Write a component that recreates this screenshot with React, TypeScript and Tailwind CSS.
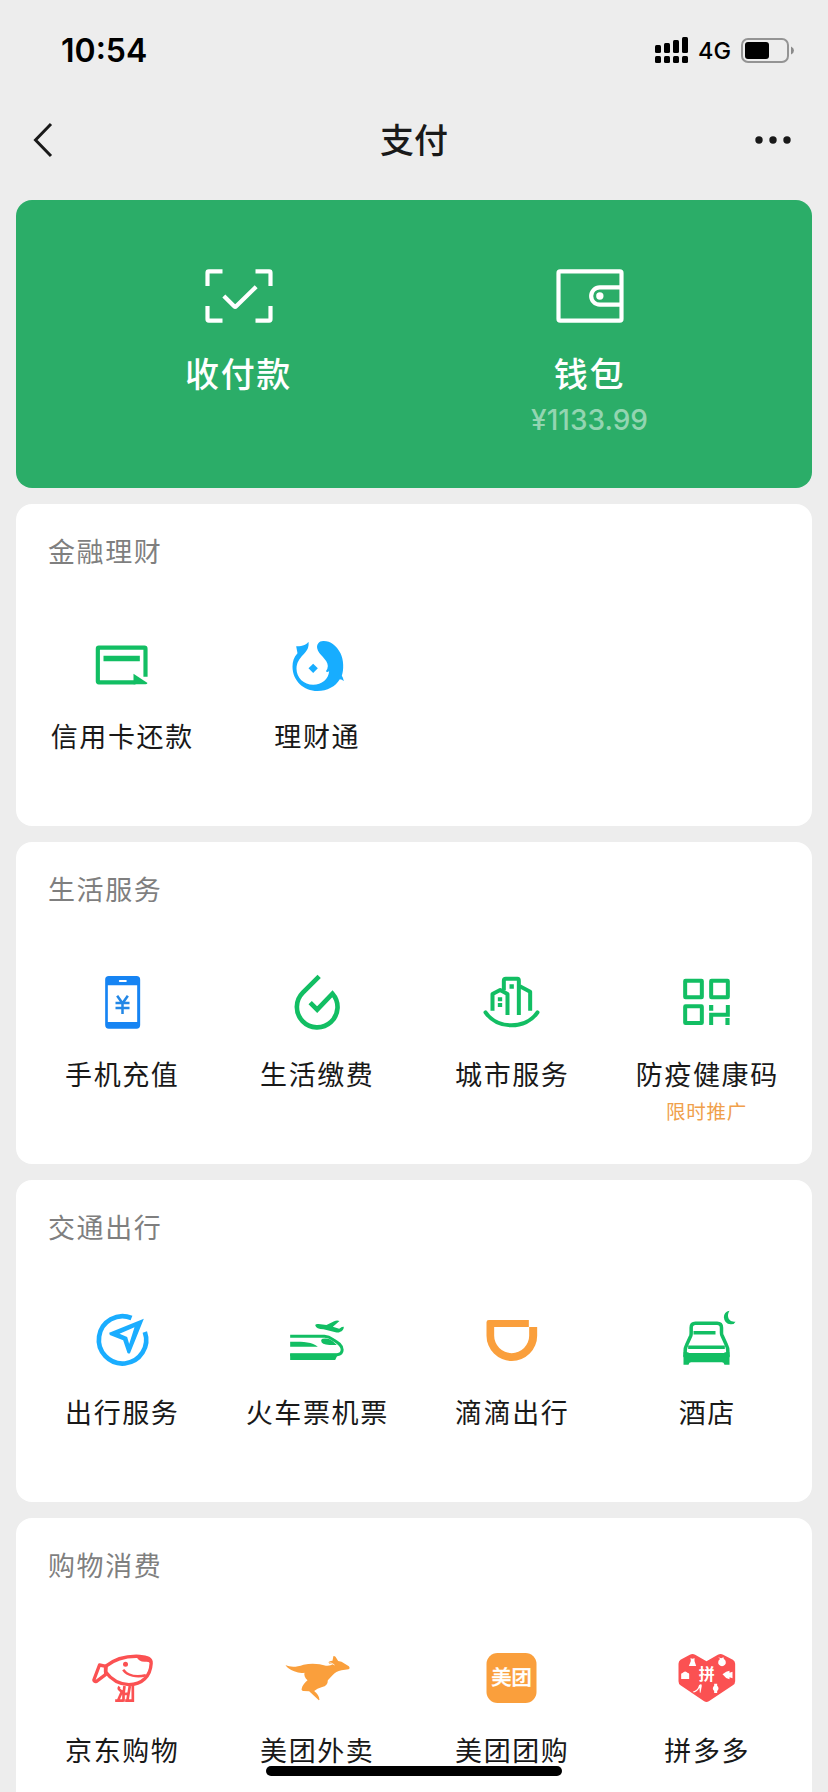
import type { ReactNode } from "react";

function Icon({ viewBox, children }: { viewBox: string; children: ReactNode }) {
  return (
    <svg viewBox={viewBox} className="w-20 h-20 shrink-0" fill="none">
      {children}
    </svg>
  );
}

const GREEN = "#12be63";
const BLUE = "#1aadff";
const ORANGE = "#fa9f3c";
const RED = "#fb5152";

const ScanIcon = () => (
  <Icon viewBox="115.5 48 240 240">
    <g stroke="#fff" strokeWidth="12.500">
      <path d="M141 138V98q0-4 4-4h41M285 94h41q4 0 4 4v40M330 198v40q0 4-4 4h-41M186 242h-41q-4 0-4-4v-40" />
      <path d="M190 168l31 31q3 3 6 0l60-59" />
    </g>
  </Icon>
);

const WalletIcon = () => (
  <Icon viewBox="1168.5 48 240 240">
    <rect x="1194" y="94" width="189" height="148" rx="5" stroke="#fff" strokeWidth="12.500" />
    <path d="M1383 142h-65a26 26 0 0 0 0 52h65" stroke="#fff" strokeWidth="12.500" />
    <circle cx="1318" cy="168" r="11" fill="#fff" />
  </Icon>
);

const CardIcon = () => (
  <Icon viewBox="154.5 315 240 240">
    <path d="M345 470V386q0-3-3-3H205q-3 0-3 3v98q0 3 3 3h110" stroke={GREEN} strokeWidth="12.500" />
    <path d="M219 407h109v17H219z" fill={GREEN} />
    <path d="M309 461l42 28q-2 4-6 4h-36z" fill={GREEN} />
  </Icon>
);

const LctIcon = () => (
  <Icon viewBox="739.5 315 240 240">
    <g fill="#17adff">
      <path d="M834 365C830 372 815 380 797 379L801 400C790 412 786 425 786 440C786 482 820 513 861 513C890 513 915 500 928 478Q935 478 940 484Q939 474 934 467C940 450 940 420 930 400C918 376 900 363 880 363C866 362 858 372 860 385C864 405 892 418 892 438Q892 446 886 454Q891 459 896 453C894 478 874 494 848 494C820 494 798 473 798 446C798 428 806 417 818 404C830 392 836 382 834 365z" />
      <path d="M848 431l14 14-14 14-14-14z" />
    </g>
  </Icon>
);

const PhoneIcon = () => (
  <Icon viewBox="64.5 39 240 240">
    <rect x="134" y="78" width="105" height="158" rx="11" fill="#1684f3" />
    <path d="M142 106h88v110h-88z" fill="#fff" />
    <rect x="175" y="90" width="24" height="6" rx="3" fill="#fff" />
    <path d="M170 137l16 23 16-23M186 159v33M165 159h42M165 174h42" stroke="#2287e6" strokeWidth="7.500" />
  </Icon>
);

const DropIcon = () => (
  <Icon viewBox="649.5 39 240 240">
    <path d="M776 79l-49 49a61 61 0 1 0 89 3l-46 48-21-21" stroke={GREEN} strokeWidth="14" />
  </Icon>
);

const CityIcon = () => (
  <Icon viewBox="64.5 39 240 240">
    <g stroke={GREEN} strokeWidth="12" strokeLinejoin="round">
      <path d="M126 182v-50l23-12 22 12v63" />
      <path d="M160 121V92q0-6 6-6h35q4 0 4 6v103" />
      <path d="M208 109l31 16v57" />
      <path d="M105 187c35 52 121 52 156 0" strokeLinecap="round" />
    </g>
    <path d="M177 103h13v13h-13zM142 142h13v12h-13zM142 159h13v12h-13z" fill={GREEN} />
  </Icon>
);

const CodeIcon = () => (
  <Icon viewBox="649.5 39 240 240">
    <g stroke={GREEN} strokeWidth="12">
      <rect x="704" y="92" width="50" height="50" rx="1" />
      <rect x="782" y="92" width="50" height="50" rx="1" />
      <rect x="704" y="169" width="50" height="50" rx="1" />
      <path d="M782 225v-31h50v-29" />
      <path d="M782 165v17M831 204v21" strokeWidth="12.500" />
    </g>
  </Icon>
);

const CompassIcon = () => (
  <Icon viewBox="64.5 33 240 240">
    <path d="M213 84a71 71 0 1 0 40 42" stroke={BLUE} strokeWidth="14" />
    <path d="M250 86l-104 42 2 7 40 16 13 38q6 4 8-1z" fill={BLUE} />
    <path d="M222 112l-45 19 23 10 6 21z" fill="#fff" />
  </Icon>
);

const TrainIcon = () => (
  <Icon viewBox="649.5 33 240 240">
    <path d="M689 194h141q15-2 15-15c0-14-14-22-27-30-8-6-15-10-26-10H689" stroke={GREEN} strokeWidth="9" />
    <path d="M689 191h144l-9 19H689zM689 155c30 0 66-1 83 15h-83z" fill={GREEN} />
    <path d="M786 146q17-3 29 6l14 13h-22q-25-2-25-13 0-5 4-6z" fill={GREEN} />
    <path d="M764 105q3-4 10-3l24 3 23-11q8-4 16-1l-20 17 19 6 8-5 6-1q0 12-12 16-4 3-13 1l-36-9q-22 0-25-13z" fill={GREEN} />
  </Icon>
);

const DidiIcon = () => (
  <Icon viewBox="64.5 33 240 240">
    <path
      d="M115 90h120v21h25v26a76 76 0 0 1-152 0V97q0-7 7-7zM131 111v26a52.500 52.500 0 0 0 105 0v-26z"
      fill={ORANGE}
      fillRule="evenodd"
    />
  </Icon>
);

const HotelIcon = () => (
  <Icon viewBox="649.5 33 240 240">
    <g stroke={GREEN} strokeWidth="10.500">
      <path d="M704 200v-18q0-8 4-16l13-29q1-3 1-8v-16q0-13 13-13h65q13 0 13 13v16q0 5 2 8l13 29q4 8 4 16v18" />
      <path d="M729 128h66M713 172h110" />
    </g>
    <path d="M699 224v-30h12l6-5h102l6 5h12v30h-15q-2-7-8-7h-92q-6 0-8 7z" fill={GREEN} />
    <path d="M699 187h138v15H699z" fill={GREEN} />
    <path d="M714 187q2-7 9-7h90q7 0 9 7v2H714z" fill="#fff" />
    <path d="M837 62q-17 3-17 20 2 20 20 21 11 1 15-8-14 2-20-8-6-12 2-25z" fill={GREEN} />
  </Icon>
);

const JdIcon = () => (
  <Icon viewBox="64.5 27 240 240">
    <g stroke={RED} strokeWidth="10" strokeLinejoin="round">
      <path d="M135 109c26-21 64-32 103-30 22 1 35 7 34 21-2 38-27 64-67 64-32-2-54-17-70-39z" />
      <path d="M137 109l-20-4-17 45q1 6 8 4l27-20z" />
      <path d="M188 119c13 18 40 23 68 17" strokeWidth="7.500" />
    </g>
    <circle cx="195" cy="103" r="7.500" fill={RED} />
    <path d="M228 80q8 18 30 15 13 0 15 11 4-20-9-25-14-6-36-1z" fill={RED} />
    <path d="M177 170q-5 6 1 10l6 5-12 28M192 168l-3 24v23M190 192l16-1M208 168l-8 47M217 168v47M164 212h25M194 212h27" stroke={RED} strokeWidth="8" />
  </Icon>
);

const KangarooIcon = () => (
  <Icon viewBox="649.5 27 240 240">
    <path
      d="M675 105c15 7 31 7 54-1 28-6 49-2 67 3q12 2 22-5l-11-1q-7-6 4-8l5-1 2-10q0-7 7-2l8 13 10 2 22 14q5 6-1 9l-21 3q-17 3-27 15l-14 15q0 17-17 20-16 5-24 12 15 12 16 26l-2 2-29-27-17-1q-8-1-5-8 2-11 17-24-12-12-9-23-14 3-31-4-19-7-26-19z"
      fill={ORANGE}
    />
    <path d="M807 98q8 1 15 7" stroke="#fff" strokeWidth="2.500" />
  </Icon>
);

const MeituanIcon = () => (
  <Icon viewBox="64.5 27 240 240">
    <rect x="108" y="69" width="150" height="150" rx="33" fill={ORANGE} />
    <text x="183" y="166" fontSize="61" textAnchor="middle" fontWeight="500" fill="#fff" stroke="#fff" strokeWidth="1" className="font-['Noto_Sans_CJK_SC',sans-serif]">
      美团
    </text>
  </Icon>
);

const PddIcon = () => (
  <Icon viewBox="649.5 27 240 240">
    <path d="M690 89l28-15q8-4 16 0l34 20 34-20q8-4 16 0l29 15q7 4 7 12v53q0 8-7 12l-72 48q-7 4-14 0l-71-48q-6-4-6-12v-53q0-8 6-12z" fill={RED} />
    <text x="769" y="149" fontSize="48" textAnchor="middle" fontWeight="700" fill="#fff" className="font-['Noto_Sans_CJK_SC',sans-serif]">
      拼
    </text>
    <g fill="#fff">
      <path d="M720 84q6 4 12 0v9l5 15h-22l6-15z" />
      <path d="M692 132q1-3 4-3 8-9 16 0 4 0 4 3v15h-24z" />
      <path d="M803 82l9 3 7-3 1 5a11.500 11.500 0 1 1-11 0z" />
      <path d="M816 133l11-8 10-3v6l9-3v20l-9-3v6l-10-4z" />
      <path d="M727 185q14-3 19-20l6-3 2 5-4 21h-2l-1-15q-8 14-20 14z" />
      <path d="M791 161h9v6q8 8 0 16v6h-9v-6q-8-8 0-16z" />
    </g>
  </Icon>
);

type Item = { name: string; icon: ReactNode; note?: string };

const sections: { title: string; items: Item[] }[] = [
  {
    title: "金融理财",
    items: [
      { name: "信用卡还款", icon: <CardIcon /> },
      { name: "理财通", icon: <LctIcon /> },
    ],
  },
  {
    title: "生活服务",
    items: [
      { name: "手机充值", icon: <PhoneIcon /> },
      { name: "生活缴费", icon: <DropIcon /> },
      { name: "城市服务", icon: <CityIcon /> },
      { name: "防疫健康码", icon: <CodeIcon />, note: "限时推广" },
    ],
  },
  {
    title: "交通出行",
    items: [
      { name: "出行服务", icon: <CompassIcon /> },
      { name: "火车票机票", icon: <TrainIcon /> },
      { name: "滴滴出行", icon: <DidiIcon /> },
      { name: "酒店", icon: <HotelIcon /> },
    ],
  },
  {
    title: "购物消费",
    items: [
      { name: "京东购物", icon: <JdIcon /> },
      { name: "美团外卖", icon: <KangarooIcon /> },
      { name: "美团团购", icon: <MeituanIcon /> },
      { name: "拼多多", icon: <PddIcon /> },
    ],
  },
];

function StatusBar() {
  return (
    <div className="h-[100px] pl-[61px] pr-[34px] flex items-center justify-between font-['Inter',sans-serif] text-black">
      <span className="pt-px text-[32px] leading-none font-semibold">10:54</span>
      <div className="flex items-center">
        <svg width="33" height="26" viewBox="0 0 33 26">
          <rect x="0" y="8" width="6" height="8" rx="1.500" />
          <rect x="9" y="6" width="6" height="10" rx="1.500" />
          <rect x="18" y="3" width="6" height="13" rx="1.500" />
          <rect x="27" y="0" width="6" height="16" rx="1.500" />
          {[0, 9, 18, 27].map((x) => (
            <rect key={x} x={x} y="19" width="6" height="7" rx="1.500" />
          ))}
        </svg>
        <span className="ml-[10px] w-[33px] pt-px text-[23.5px] leading-none font-medium">4G</span>
        <svg className="ml-[10px]" width="53" height="25" viewBox="0 0 53 25">
          <rect x="1" y="1" width="46" height="23" rx="6" fill="none" stroke="#949494" strokeWidth="2" />
          <rect x="4" y="4" width="24" height="17" rx="3" />
          <path d="M50 8.500q3 1.500 3 4t-3 4z" fill="#8a8a8a" />
        </svg>
      </div>
    </div>
  );
}

function NavBar() {
  return (
    <div className="h-20 mb-5 pl-[33px] pr-[37px] grid grid-cols-[1fr_auto_1fr] items-center text-[#191919]">
      <svg width="36" height="36" viewBox="0 0 36 36" fill="none">
        <path d="M18 2L2.500 18 18 34" stroke="#191919" strokeWidth="3" />
      </svg>
      <h1 className="pb-[2px] pl-1 text-[34px] leading-none font-medium">支付</h1>
      <svg className="justify-self-end" width="36" height="8" viewBox="0 0 36 8" fill="#191919">
        <circle cx="4" cy="4" r="3.700" />
        <circle cx="18" cy="4" r="3.700" />
        <circle cx="32" cy="4" r="3.700" />
      </svg>
    </div>
  );
}

function Section({ title, items }: { title: string; items: Item[] }) {
  return (
    <section className="h-[322px] shrink-0 rounded-2xl bg-white pt-[23px] px-2">
      <h2 className="pl-6 text-[27px] leading-[48px] tracking-[1.600px] text-[#7f7f7f]">{title}</h2>
      <div className="mt-[50px] grid grid-cols-4">
        {items.map((item) => (
          <div key={item.name} className="flex flex-col items-center">
            {item.icon}
            <p className="mt-[11px] pl-[1.5px] text-[27px] leading-10 tracking-[1.600px] whitespace-nowrap text-[#191919]">{item.name}</p>
            {item.note && <p className="mt-[2px] text-[19.5px] leading-[30px] tracking-[0.800px] text-[#f0a04b]">{item.note}</p>}
          </div>
        ))}
      </div>
    </section>
  );
}

export default function App() {
  return (
    <div className="relative w-[828px] h-[1792px] overflow-hidden bg-[#ededed] font-['Noto_Sans_CJK_SC',sans-serif]">
      <StatusBar />
      <NavBar />
      <main className="px-4 flex flex-col gap-4">
        <div className="h-[288px] shrink-0 rounded-2xl bg-[#2bad68] px-[47px] pt-14 grid grid-cols-2 text-white">
          <div className="flex flex-col items-center">
            <ScanIcon />
            <p className="mt-[13px] text-[34px] leading-[48px] tracking-[1.700px] font-medium">收付款</p>
          </div>
          <div className="flex flex-col items-center">
            <WalletIcon />
            <p className="mt-[13px] text-[34px] leading-[48px] tracking-[1.700px] font-medium">钱包</p>
            <p className="mt-1 font-['Inter',sans-serif] text-[28px] leading-[38px] font-medium text-[#93d5b1]">¥1133.99</p>
          </div>
        </div>
        {sections.map((s) => (
          <Section key={s.title} title={s.title} items={s.items} />
        ))}
      </main>
      <div className="absolute left-[266px] top-[1766px] w-[296px] h-[10px] rounded-full bg-black" />
    </div>
  );
}
